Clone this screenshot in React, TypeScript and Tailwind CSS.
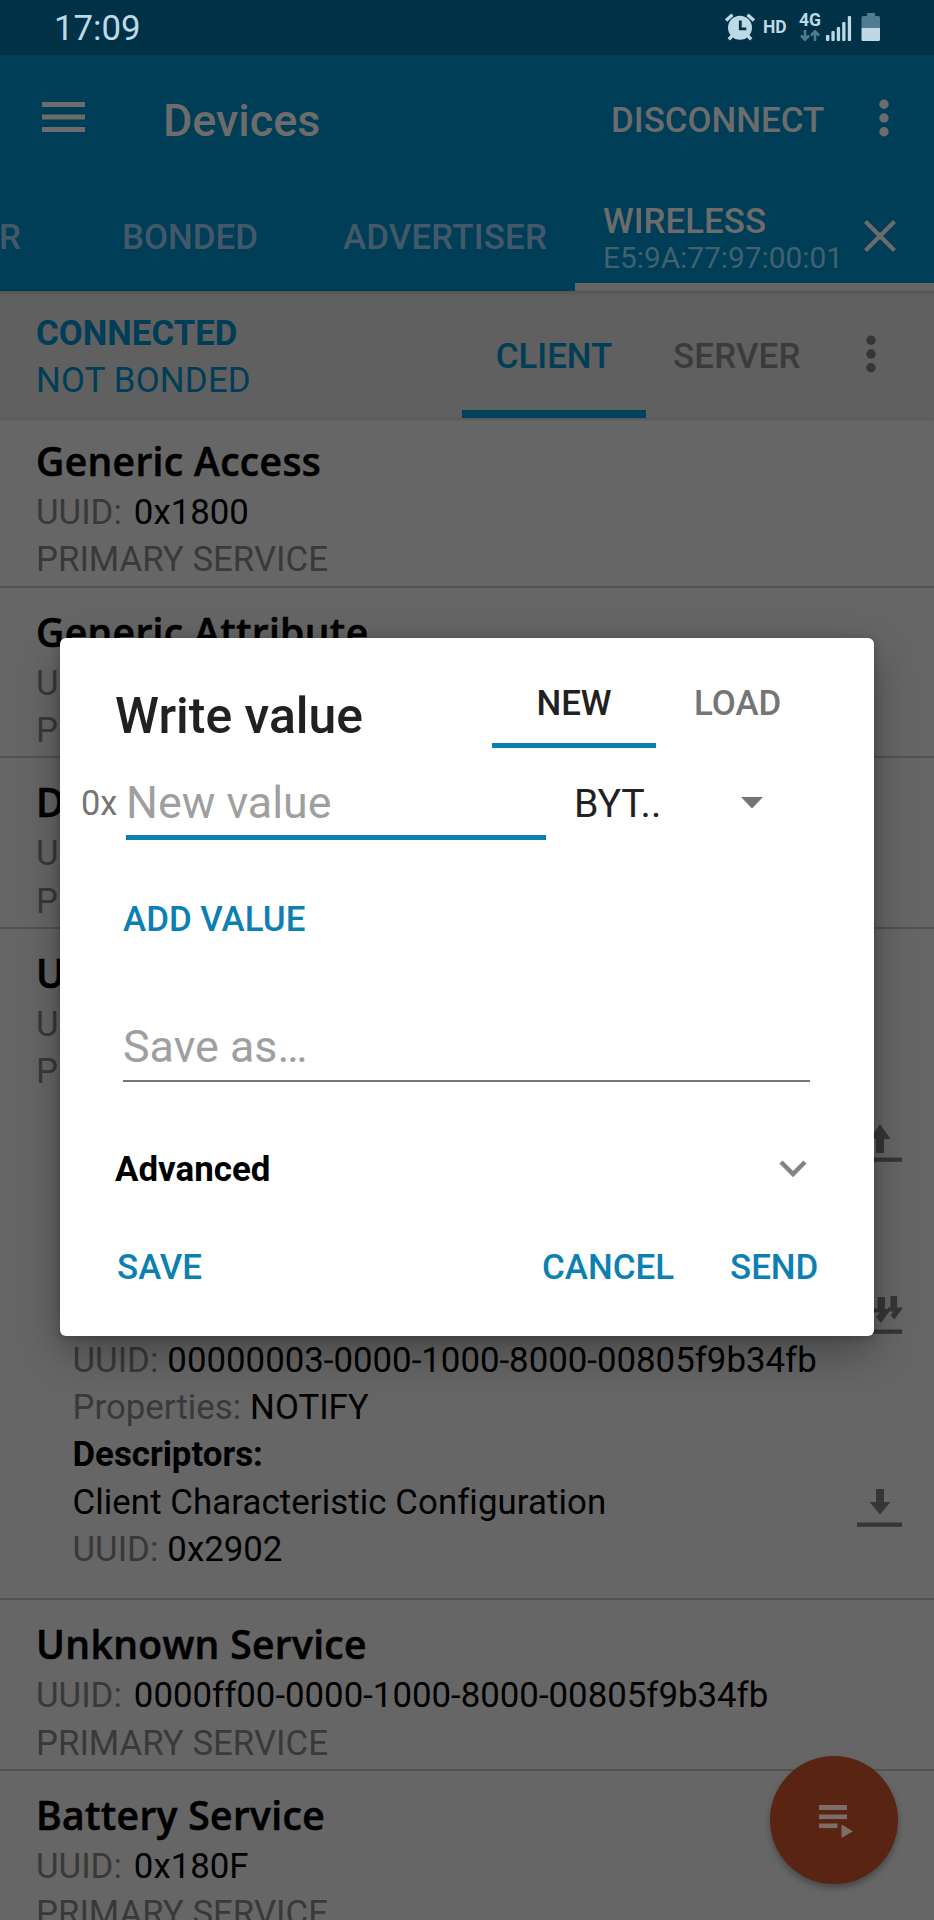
import type { ReactNode } from "react";

const LINE = "h-[47.4px] text-[34.8px] leading-[47.4px] whitespace-pre";

function Dots({ className }: { className: string }) {
  return (
    <svg className={className} width="12" height="38" viewBox="0 0 12 38" fill="currentColor">
      <circle cx="6" cy="5.2" r="4.7" />
      <circle cx="6" cy="19" r="4.7" />
      <circle cx="6" cy="32.8" r="4.7" />
    </svg>
  );
}

function StatusBar() {
  return (
    <div className="flex h-[55px] shrink-0 items-start bg-[#003147] pl-[54px] text-[#bdd9e6]">
      <span className="w-[670px] pt-[5px] text-[34.8px] leading-[46px]">17:09</span>
      <svg className="mt-[13px]" width="32" height="28" viewBox="0 0 32 28">
        <g stroke="currentColor" strokeWidth="3.4" fill="none">
          <path d="M2 7.5 8.5 1.8M23.5 1.8 30 7.5M8.5 22.5 4.8 26.4M23.5 22.5 27.2 26.4" />
        </g>
        <circle cx="16" cy="14.7" r="12" fill="currentColor" />
        <path d="M16.3 7.5v8.3h6" stroke="#003147" strokeWidth="2.8" fill="none" />
      </svg>
      <span className="ml-[7px] mt-[16px] w-[36px] text-[17.5px] font-bold leading-[22px]">HD</span>
      <div className="mt-[10px] flex w-[27px] flex-col">
        <span className="text-[17.5px] font-bold leading-[20px]">4G</span>
        <svg className="-mt-px ml-[1px]" width="20" height="13" viewBox="0 0 20 13" fill="none" stroke="#4f7c8f" strokeWidth="2.6">
          <path d="M5 1v9M1 6.5l4 4.2 4-4.2M15 12V3M11 6.5l4-4.2 4 4.2" />
        </svg>
      </div>
      <svg className="mt-[16px]" width="26" height="25" viewBox="0 0 26 25" fill="currentColor">
        <rect x="0" y="19" width="3.3" height="6" rx="1" />
        <rect x="5.4" y="15" width="3.3" height="10" rx="1" />
        <rect x="10.8" y="11" width="3.3" height="14" rx="1" />
        <rect x="16.2" y="6" width="3.3" height="19" rx="1" />
        <rect x="21.8" y="0" width="3.3" height="25" rx="1" />
      </svg>
      <svg className="ml-[9px] mt-[13px]" width="20" height="28" viewBox="0 0 20 28">
        <path d="M6 0h8v3h3.5a1.5 1.5 0 0 1 1.5 1.5V15H.5V4.500A1.500 1.500 0 0 1 2 3h4z" fill="#4f7c8f" />
        <path d="M.5 15H19v11.500a1.500 1.500 0 0 1-1.500 1.500H2A1.500 1.500 0 0 1 .5 26.500z" fill="currentColor" />
      </svg>
    </div>
  );
}

function AppBar() {
  return (
    <header className="h-[236px] shrink-0 overflow-hidden bg-[#003e57] text-[#6c6c6c]">
      <div className="flex h-[126px] items-center">
        <svg className="-mt-[2px] ml-[42px]" width="43" height="30" viewBox="0 0 43 30" fill="currentColor">
          <rect width="43" height="5" />
          <rect y="12.500" width="43" height="5" />
          <rect y="25" width="43" height="5" />
        </svg>
        <h1 className="ml-[78px] w-[448px] pt-[5px] text-[44.900px] font-medium leading-[54px]">Devices</h1>
        <span className="w-[267px] pt-[5px] text-[34.900px] font-medium leading-[46px]">DISCONNECT</span>
        <Dots className="" />
      </div>
      <div className="flex h-[110px] text-[34.900px] font-medium leading-[46px]">
        <div className="flex w-[122px] pt-[34px] text-[#43596a]">
          <div className="flex w-[21px] justify-end overflow-hidden">SCANNER</div>
        </div>
        <span className="w-[221px] pt-[34px] text-[#43596a]">BONDED</span>
        <span className="w-[232px] pt-[34px] tracking-[0.15px] text-[#43596a]">ADVERTISER</span>
        <div className="flex w-[359px] border-b-[8px] border-[#656565] pl-[28px]">
          <div className="w-[261px] pt-[18px]">
            <div className="h-[40px]">WIRELESS</div>
            <div className="text-[29.800px] font-normal leading-[38px] text-[#41616f]">E5:9A:77:97:00:01</div>
          </div>
          <svg className="mt-[39px]" width="32" height="32" viewBox="0 0 32 32" fill="none" stroke="currentColor" strokeWidth="4.2">
            <path d="M1.500 1.500l29 29M30.500 1.500l-29 29" />
          </svg>
        </div>
      </div>
    </header>
  );
}

function ConnectionBar() {
  return (
    <div className="relative z-10 flex h-[127px] shrink-0 bg-[#606060] pl-[36px] font-medium shadow-[0_1px_3px_rgba(0,0,0,0.2),inset_0_6px_4px_-4px_rgba(0,0,0,0.15)]">
      <div className="w-[426px] pt-[18.500px] text-[#003d57]">
        <div className={`${LINE} font-bold`}>CONNECTED</div>
        <div className={`${LINE} font-normal tracking-[0.2px]`}>NOT BONDED</div>
      </div>
      <div className="flex w-[184px] justify-center border-b-[8px] border-[#00425c] pt-[43px] text-[34.900px] leading-[46px] text-[#003d57]">
        CLIENT
      </div>
      <div className="w-[219px] pl-[27px] pt-[43px] text-[34.900px] leading-[46px] tracking-[0.15px] text-[#3b3b3b]">SERVER</div>
      <Dots className="mt-[44px] text-[#353535]" />
    </div>
  );
}

function Field({ label, value, gap }: { label: string; value: string; gap: string }) {
  return (
    <div className={`${LINE} flex ${gap}`}>
      <span className="text-[#393939]">{label}</span>
      <span>{value}</span>
    </div>
  );
}

function Service({ name, uuid, children }: { name: string; uuid: string; children?: ReactNode }) {
  return (
    <section className="shrink-0 border-b-2 border-[#525252]">
      <div className="h-[168.6px] overflow-hidden pl-[36px] pt-[19px]">
        <h2 className="h-[53px] font-['Open_Sans'] text-[39px] font-semibold leading-[50px] tracking-[0.35px] [-webkit-text-stroke:0.6px_black]">
          {name}
        </h2>
        <Field label="UUID:" value={uuid} gap="gap-[12px]" />
        <div className={`${LINE} text-[#393939]`}>PRIMARY SERVICE</div>
      </div>
      {children}
    </section>
  );
}

function TransferIcon({ kind }: { kind: "up" | "down" | "notify" }) {
  return (
    <svg width="46" height="38" viewBox="0 0 46 38" fill="#363636">
      {kind === "up" && <path d="M23 0 33.500 15H27v14h-8V15h-6.500z" />}
      {kind === "down" && <path d="M19 0h8v13h6.500L23 25.500 12.500 13H19z" />}
      {kind === "notify" && (
        <path d="M6 0h7v12h6.500L10 26l-5-6 4-4H0l2-4h4zM20.500 1H28v12h6L24 27l-5-6 4-4.500h-9l2.500-3.500h4zM33.500 0H40v11.500h6L37.500 23.500 33.500 19.500l3-4H29.500l1.500-4h2.500z" />
      )}
      <rect y="33.500" width="45" height="4.300" />
    </svg>
  );
}

function Characteristics() {
  return (
    <div className="flex h-[501px] pl-[72.500px]">
      <div className="w-[784.500px] pt-[239.300px]">
        <Field label="UUID:" value="00000003-0000-1000-8000-00805f9b34fb" gap="gap-[9px]" />
        <Field label="Properties:" value="NOTIFY" gap="gap-[9px]" />
        <div className={`${LINE} font-bold`}>Descriptors:</div>
        <div className={`${LINE} tracking-[0.08px]`}>Client Characteristic Configuration</div>
        <Field label="UUID:" value="0x2902" gap="gap-[9px]" />
      </div>
      <div className="flex flex-col pt-[27px]">
        <div className="h-[172px]">
          <TransferIcon kind="up" />
        </div>
        <div className="h-[193px]">
          <TransferIcon kind="notify" />
        </div>
        <TransferIcon kind="down" />
      </div>
    </div>
  );
}

function WriteDialog() {
  return (
    <div
      role="dialog"
      className="absolute left-[60px] top-[638px] z-20 flex h-[698px] w-[814px] flex-col rounded-[6px] bg-white text-[34.900px] font-medium leading-[46px] text-[#212121] shadow-[0_16px_44px_rgba(0,0,0,0.32),0_2px_10px_rgba(0,0,0,0.2)]"
    >
      <div className="flex h-[109.500px] pl-[55px]">
        <h2 className="w-[377px] pt-[47px] text-[49.900px] leading-[62px]">Write value</h2>
        <div className="flex w-[164px] justify-center border-b-[5px] border-[#0c80b0] pt-[43px]">NEW</div>
        <div className="pl-[38px] pt-[43px] text-[#757575]">LOAD</div>
      </div>
      <div className="flex h-[92px] font-normal">
        <span className="w-[66px] pl-[21px] pt-[32px] text-[34.400px] text-[#757575]">0x</span>
        <div className="h-[92px] w-[420px] border-b-[5px] border-[#0c80b0] pt-[27px] text-[44.800px] leading-[56px] text-[#9f9f9f]">
          New value
        </div>
        <span className="w-[195px] pl-[28px] pt-[31px] text-[39.300px] leading-[50px]">BYT..</span>
        <svg className="mt-[49px]" width="22" height="12" viewBox="0 0 22 12" fill="#757575">
          <path d="M0 0h22L11 11.500z" />
        </svg>
      </div>
      <div className="h-[173.500px] pl-[63px] pt-[57px] text-[#0c80b0]">ADD VALUE</div>
      <div className="ml-[63px] h-[69px] w-[687px] border-b-2 border-[#757575] pt-[6px] text-[44.800px] font-normal leading-[56px] text-[#9f9f9f]">
        Save as…
      </div>
      <div className="flex h-[103px] pl-[55px] pt-[65px] font-bold leading-[46px] text-black">
        <span className="w-[664px]">Advanced</span>
        <svg className="mt-[13px]" width="28" height="18" viewBox="0 0 28 18" fill="none" stroke="#838383" strokeWidth="4.500">
          <path d="M2 2l12 12L26 2" />
        </svg>
      </div>
      <div className="flex pl-[57px] pt-[60px] text-[#0c80b0]">
        <span className="w-[425px]">SAVE</span>
        <span className="w-[188px]">CANCEL</span>
        <span>SEND</span>
      </div>
    </div>
  );
}

export default function App() {
  return (
    <div className="relative flex h-[1920px] w-[934px] flex-col overflow-hidden bg-[#666666] font-[Roboto,sans-serif] text-black">
      <StatusBar />
      <AppBar />
      <ConnectionBar />
      <main className="-mt-[1px] flex flex-col">
        <Service name="Generic Access" uuid="0x1800" />
        <Service name="Generic Attribute" uuid="0x1801" />
        <Service name="Device Information" uuid="0x180A" />
        <Service name="Unknown Service" uuid="00000001-0000-1000-8000-00805f9b34fb">
          <Characteristics />
        </Service>
        <Service name="Unknown Service" uuid="0000ff00-0000-1000-8000-00805f9b34fb" />
        <Service name="Battery Service" uuid="0x180F" />
      </main>
      <WriteDialog />
      <button className="absolute left-[770px] top-[1756px] flex h-[128px] w-[128px] items-center justify-center rounded-full bg-[#5a2413] shadow-[0_4px_6px_rgba(0,0,0,0.3)]">
        <svg className="ml-[4px] mt-[4px]" width="36" height="34" viewBox="0 0 36 34" fill="#7d6d69">
          <rect x="1" y="0" width="28" height="5" />
          <rect x="1" y="9.500" width="28" height="4.600" />
          <rect x="1" y="18.500" width="18.500" height="4.600" />
          <path d="M23.500 19.500v13.500L35 26.200z" />
        </svg>
      </button>
    </div>
  );
}
